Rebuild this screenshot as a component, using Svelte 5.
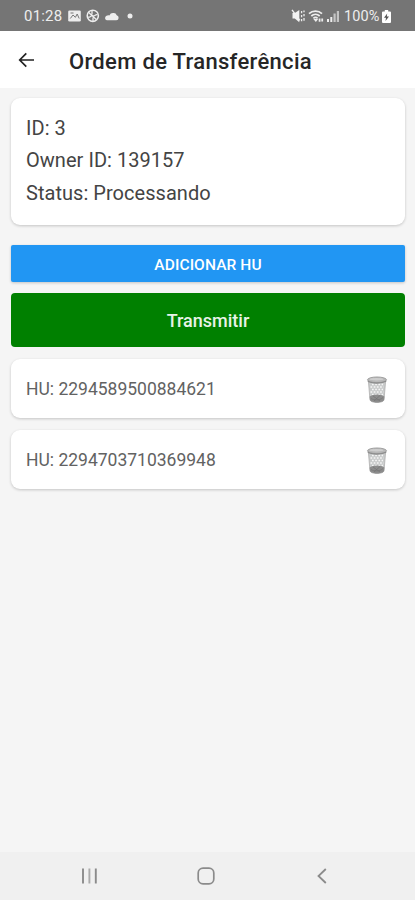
<script>
  const details = ['ID: 3', 'Owner ID: 139157', 'Status: Processando'];
  const units = ['2294589500884621', '2294703710369948'];
</script>

<div class="screen">
  <div class="status">
    <span class="time">01:28</span>
    <svg class="left-icons" width="68" height="16" viewBox="0 0 68 16" fill="none" stroke="#ededed">
      <rect x="0.2" y="2.4" width="12.6" height="11.2" rx="1.4" fill="#ededed" stroke="none" />
      <path d="M2.3 10.5 5 7l2.4 2.3L9.2 6l2 4.5M2.5 5h3" stroke="#777" stroke-width="1" />
      <circle cx="24.8" cy="7.8" r="5.6" stroke-width="1.5" />
      <path d="M20.7 4.5l7.600 7M20 9c2 1 3-2 5-1.200s2.500-2 4.500-1M24 2.500v4M25 13v-3.500" stroke-width="1.300" />
      <path d="M39 12.300h9.300a2.600 2.600 0 0 0 .4-5.100 3.300 3.300 0 0 0-3.700-2.200 3.800 3.800 0 0 0-3.600 2.400c-2.500-.3-4.300 1-4.300 2.700 0 1.300.7 2.200 1.900 2.200z" fill="#ededed" stroke="none" />
      <circle cx="62" cy="8" r="2.500" fill="#ededed" stroke="none" />
    </svg>
    <span class="grow"></span>
    <svg class="right-icons" width="50" height="16" viewBox="0 0 50 16" fill="none" stroke="#ededed">
      <path d="M1.500 5h2.300L8.300 2v12.300L3.800 10.500H1.500z" fill="#f2f2f2" stroke="none" />
      <path d="M1 1.800l7.800 10.500" stroke="#f2f2f2" stroke-width="1.400" />
      <path d="M10.600 3v2.200M10.600 7v2.200M10.600 11v2.300M13 2.500v1.800M13 6v2.200M13 10v2.800" stroke-width="1.300" />
      <path d="M18 5.600c3.600-3.400 9.400-3.400 13 0M20.300 8c2.400-2.200 6-2.200 8.400 0M22.400 10.300c1.300-1.200 2.900-1.200 4.200 0" stroke-width="1.700" />
      <path d="M24.800 14l-2.400-3h4.800z" fill="#ededed" stroke="none" />
      <path d="M28.600 10.500v3.300M31.200 10.500v3" stroke-width="1.800" />
      <path d="M37 11v3M40.300 9V14" stroke-width="2" />
      <path d="M43.600 5.500V14M46.900 3v11" stroke-width="2.200" stroke="#c4c4c4" />
    </svg>
    <span class="percent">100%</span>
    <svg class="battery" width="9" height="13" viewBox="0 0 9 13">
      <path d="M2.800 0h3.400v1.500H8a1 1 0 0 1 1 1V12a1 1 0 0 1-1 1H1a1 1 0 0 1-1-1V2.500a1 1 0 0 1 1-1h1.800z" fill="#fff" />
      <path d="M5.200 3.500L2 7.800h2l-.5 3.200L7 6.600H4.800z" fill="#555" />
    </svg>
  </div>

  <header>
    <svg width="17" height="16" viewBox="0 0 17 16" fill="none" stroke="#222" stroke-width="1.700">
      <path d="M16 8H2M8.300 1.300L1.700 8l6.600 6.700" />
    </svg>
    <h1>Ordem de Transferência</h1>
  </header>

  <main>
    <section class="card info">
      {#each details as line}
        <p>{line}</p>
      {/each}
    </section>
    <button class="add"><span>ADICIONAR HU</span></button>
    <button class="send"><span>Transmitir</span></button>
    {#each units as unit}
      <div class="card row">
        <span class="hu">HU: {unit}</span>
        <svg width="22" height="28" viewBox="0 0 22 28" fill="none">
          <path d="M2.300 4l1.700 20c1 3.300 13 3.300 14 0l1.700-20z" fill="#c9cbcb" stroke="#b0b0b0" stroke-width=".8" />
          <path d="M6 8.500h11M4.500 11h13M6 13.500h11M4.500 16h13M6 18.500h11" stroke="#f6f6f6" stroke-width="1.700" stroke-dasharray="1.700 1.500" />
          <path d="M3.600 20.500c3-2.800 11.800-2.800 14.800 0L18 24c-1 3.300-13 3.300-14 0z" fill="#8c8c8c" />
          <path d="M5 22.500c3 2 9 2 12-1M7 20l7 5M14 19.500l-6 5.500" stroke="#767676" stroke-width=".8" />
          <ellipse cx="11" cy="3.800" rx="9.500" ry="2.800" fill="#b8b8b8" stroke="#a0a0a0" />
          <ellipse cx="10.500" cy="3.200" rx="7" ry="1.200" fill="#cecece" />
          <path d="M1.800 5.300c4 2.300 14 2.300 18.400 0" stroke="#8c8c8c" stroke-width="1.200" />
        </svg>
      </div>
    {/each}
  </main>

  <nav>
    <svg class="recents" width="17" height="16" viewBox="0 0 17 16" stroke="#8b8b8b" stroke-width="1.900">
      <path d="M2 .5v15M14.800.5v15" /><path d="M8.400.5v15" stroke="#aaa" />
    </svg>
    <svg class="home" width="18" height="18" viewBox="0 0 18 18" fill="none" stroke="#8b8b8b" stroke-width="1.700">
      <rect x="1.200" y="1.200" width="15.600" height="15.600" rx="4.800" />
    </svg>
    <svg width="10" height="16" viewBox="0 0 10 16" fill="none" stroke="#8b8b8b" stroke-width="1.800">
      <path d="M8.800 1L1.500 8l7.300 7" />
    </svg>
  </nav>
</div>

<style>
  :global(body) { margin: 0; }
  .screen {
    width: 415px; height: 900px; overflow: hidden;
    display: flex; flex-direction: column;
    background: #f5f5f5; font-family: Roboto, "Noto Sans", sans-serif;
  }
  .status {
    height: 31px; box-sizing: border-box; padding: 1px 24px 0 24px;
    display: flex; align-items: center; flex: none;
    background: #757575; color: #ededed; font-size: 15px; white-space: nowrap;
  }
  .time { width: 44px; letter-spacing: .2px; }
  .grow { flex: 1; }
  .percent { width: 36px; margin-left: 3px; font-size: 14.500px; letter-spacing: .1px; }
  .battery { margin-left: 2px; }
  header {
    height: 57px; box-sizing: border-box; flex: none; padding: 1px 0 0 18px;
    display: flex; align-items: center; background: #fff;
  }
  h1 {
    margin: 3px 0 0 34px; font-size: 22px; line-height: 30px; font-weight: 500;
    letter-spacing: .32px; color: #262626; white-space: nowrap;
  }
  main { flex: 1; padding: 10px 10px 0 11px; display: flex; flex-direction: column; }
  .card { background: #fff; border-radius: 9px; box-shadow: 0 1px 3px rgba(0, 0, 0, .2); box-sizing: border-box; }
  .info { height: 127px; padding: 14px 15px; }
  p { margin: 0; font-size: 20px; line-height: 32.300px; letter-spacing: .04px; color: #444; white-space: nowrap; }
  button {
    border: 0; padding: 0; color: #fff; font-family: inherit; font-weight: 500;
    display: flex; align-items: center; justify-content: center;
  }
  .add { height: 37px; margin-top: 20px; border-radius: 2px; background: #2196f3; font-size: 15.500px; letter-spacing: .1px; box-shadow: 0 1px 3px rgba(0, 0, 0, .2); }
  .add span { padding-top: 2px; }
  .send { height: 54px; margin-top: 11px; border-radius: 4px; background: #008000; font-size: 18px; color: #e8f3e8; }
  .row {
    height: 59px; margin-top: 12px; padding: 3px 17px 0 15px;
    display: flex; align-items: center; justify-content: space-between;
  }
  .hu { font-size: 17.500px; line-height: 20px; padding-bottom: 3px; color: #626262; }
  nav {
    height: 48px; flex: none; box-sizing: border-box; padding: 0 88px 0 81px;
    display: flex; align-items: center; justify-content: space-between; background: #f0f0f0;
  }
  .home { margin-right: 4px; }
</style>
